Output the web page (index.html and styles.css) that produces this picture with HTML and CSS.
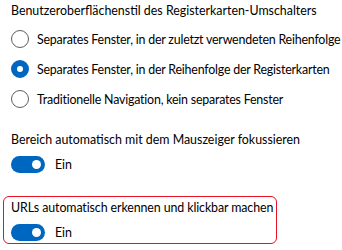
FILE: index.html
```html
<!DOCTYPE html>
<html lang="de">
<head>
    <meta charset="UTF-8">
    <meta name="viewport" content="width=device-width, initial-scale=1.0">
    <title>Registerkarten</title>
    <link rel="stylesheet" href="styles.css">
</head>
<body>
    <div class="settings">
        <div class="setting">
            <div class="label">Benutzeroberflächenstil des Registerkarten-Umschalters</div>
            <div class="radio-row first">
                <span class="radio"></span>
                <span>Separates Fenster, in der zuletzt verwendeten Reihenfolge</span>
            </div>
            <div class="radio-row">
                <span class="radio checked"></span>
                <span>Separates Fenster, in der Reihenfolge der Registerkarten</span>
            </div>
            <div class="radio-row">
                <span class="radio"></span>
                <span>Traditionelle Navigation, kein separates Fenster</span>
            </div>
        </div>

        <div class="setting">
            <div class="label">Bereich automatisch mit dem Mauszeiger fokussieren</div>
            <div class="toggle-row">
                <span class="toggle"><span class="knob"></span></span>
                <span>Ein</span>
            </div>
        </div>

        <div class="setting highlight">
            <div class="label">URLs automatisch erkennen und klickbar machen</div>
            <div class="toggle-row">
                <span class="toggle"><span class="knob"></span></span>
                <span>Ein</span>
            </div>
        </div>
    </div>
</body>
</html>
```

FILE: styles.css
```css
body { margin: 0; background: #fff; color: #000; font-family: Lato, sans-serif; font-size: 12.4px; }
.settings { padding: 1px 0 0 0; }
.setting { margin: 0 0 0 4px; padding: 0 0 0 7px; white-space: nowrap; }
.label { line-height: 20px; }
.radio-row { display: flex; align-items: center; height: 30px; letter-spacing: -0.2px; }
.radio-row.first { margin-top: 3px; }
.radio {
    flex-shrink: 0;
    width: 16px;
    height: 16px;
    border: 1px solid #5f5f5f;
    border-radius: 50%;
    margin-right: 8px;
    box-sizing: content-box;
}
.radio.checked {
    width: 6px;
    height: 6px;
    border: 6px solid #0067c0;
    background: #fff;
}
.setting + .setting { margin-top: 16px; }
.toggle-row { display: flex; align-items: center; height: 20px; margin-top: 4px; }
.toggle {
    flex-shrink: 0;
    width: 34px;
    height: 17px;
    border-radius: 9px;
    background: #0067c0;
    position: relative;
    margin-right: 10px;
}
.knob {
    position: absolute;
    right: 4px;
    top: 4px;
    width: 9px;
    height: 9px;
    border-radius: 50%;
    background: #fff;
}
.setting.highlight {
    width: fit-content;
    margin: 22px 0 0 3px;
    padding: 1px 3px 1px 7px;
    border: 1px solid #e81123;
    border-radius: 6px;
    letter-spacing: -0.1px;
}
```
